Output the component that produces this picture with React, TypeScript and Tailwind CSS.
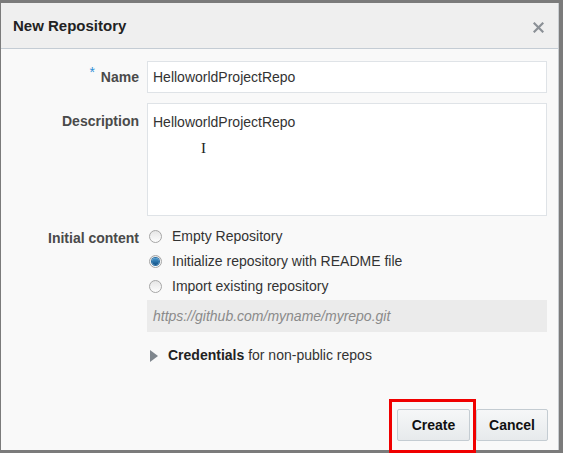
import React from 'react';

const Radio = ({ checked }: { checked?: boolean }) => (
    <span className="relative flex h-[13px] w-[13px] shrink-0 items-center justify-center rounded-full border border-[#a6a6a6] bg-gradient-to-b from-[#e6e6e6] to-[#fdfdfd]">
        {checked && <span className="h-[7px] w-[7px] rounded-full bg-gradient-to-b from-[#4b9bd1] to-[#0b4f86] shadow-[0_0_0_1px_#2a6fa5]" />}
    </span>
);

const App = () => {
    return (
        <div className="w-[563px] h-[453px] overflow-hidden bg-[#7b7b7b] font-['Liberation_Sans',Arial,sans-serif]">
            <div className="ml-px mt-[3px] mr-[4px] h-[447px] border-r border-[#c9cdd1] bg-[#f9f9f9] flex flex-col">
                {/* header */}
                <div className="flex h-[46px] shrink-0 items-center justify-between border-b border-[#c4ccd4] bg-[#efefef] pl-[12px] pr-[14px]">
                    <h1 className="mt-[1px] text-[15px] font-bold text-[#222]">New Repository</h1>
                    <svg width="11" height="11" viewBox="0 0 11 11" className="mt-[4px]">
                        <path d="M1.5 1.5l8 8M9.5 1.5l-8 8" stroke="#8b9096" strokeWidth="2.2" strokeLinecap="square" />
                    </svg>
                </div>

                {/* body */}
                <div className="flex flex-1 flex-col pt-[12px] pr-[11px] text-[14px] text-[#333]">
                    <div className="flex items-center">
                        <label className="w-[138px] shrink-0 text-right font-bold text-[#4a4a4a]">
                            <span className="relative -top-[5px] mr-[6px] font-normal text-[#2e8fd6]">*</span>Name
                        </label>
                        <div className="ml-[8px] flex h-[32px] w-[400px] items-center border border-[#dfe3e7] bg-white px-[5px]">
                            HelloworldProjectRepo
                        </div>
                    </div>

                    <div className="mt-[10px] flex">
                        <label className="w-[138px] shrink-0 pt-[8px] text-right font-bold text-[#4a4a4a]">Description</label>
                        <div className="relative ml-[8px] h-[113px] w-[400px] border border-[#dfe3e7] bg-white px-[5px] pt-[8px]">
                            HelloworldProjectRepo
                            <span className="absolute left-[53px] top-[37px] font-['Liberation_Serif',serif] text-[15px] leading-none text-[#222]">I</span>
                        </div>
                    </div>

                    <div className="mt-[8px] flex">
                        <label className="w-[138px] shrink-0 pt-[4px] text-right font-bold text-[#4a4a4a]">Initial content</label>
                        <div className="ml-[8px] flex w-[400px] flex-col">
                            <div className="flex h-[25px] items-center gap-[10px] pl-[2px]">
                                <Radio />
                                <span>Empty Repository</span>
                            </div>
                            <div className="flex h-[25px] items-center gap-[10px] pl-[2px]">
                                <Radio checked />
                                <span>Initialize repository with README file</span>
                            </div>
                            <div className="flex h-[25px] items-center gap-[10px] pl-[2px]">
                                <Radio />
                                <span>Import existing repository</span>
                            </div>
                            <div className="mt-[1px] flex h-[32px] items-center bg-[#ebebeb] px-[6px] italic text-[#8a8a8a]">
                                https://github.com/myname/myrepo.git
                            </div>
                            <div className="mt-[13px] flex items-center gap-[10px] pl-[3px]">
                                <svg width="8" height="12" viewBox="0 0 8 12">
                                    <path d="M0 0L8 6L0 12Z" fill="#7f868d" />
                                </svg>
                                <span><b className="text-[#222]">Credentials</b> for non-public repos</span>
                            </div>
                        </div>
                    </div>

                    <div className="mt-auto mb-[9px] -mr-[1px] flex justify-end gap-[6px]">
                        <div className="relative">
                            <button className="h-[32px] w-[73px] rounded-[2px] border border-[#c4ccd2] bg-gradient-to-b from-[#f6f7f8] to-[#e7eaec] font-bold text-[#111]">
                                Create
                            </button>
                            <div className="pointer-events-none absolute -left-[8px] -top-[10px] h-[54px] w-[87px] border-[3px] border-[#f00000]" />
                        </div>
                        <button className="h-[32px] w-[72px] rounded-[2px] border border-[#c4ccd2] bg-gradient-to-b from-[#f6f7f8] to-[#e7eaec] font-bold text-[#111]">
                            Cancel
                        </button>
                    </div>
                </div>
            </div>
        </div>
    );
};

export default App;
